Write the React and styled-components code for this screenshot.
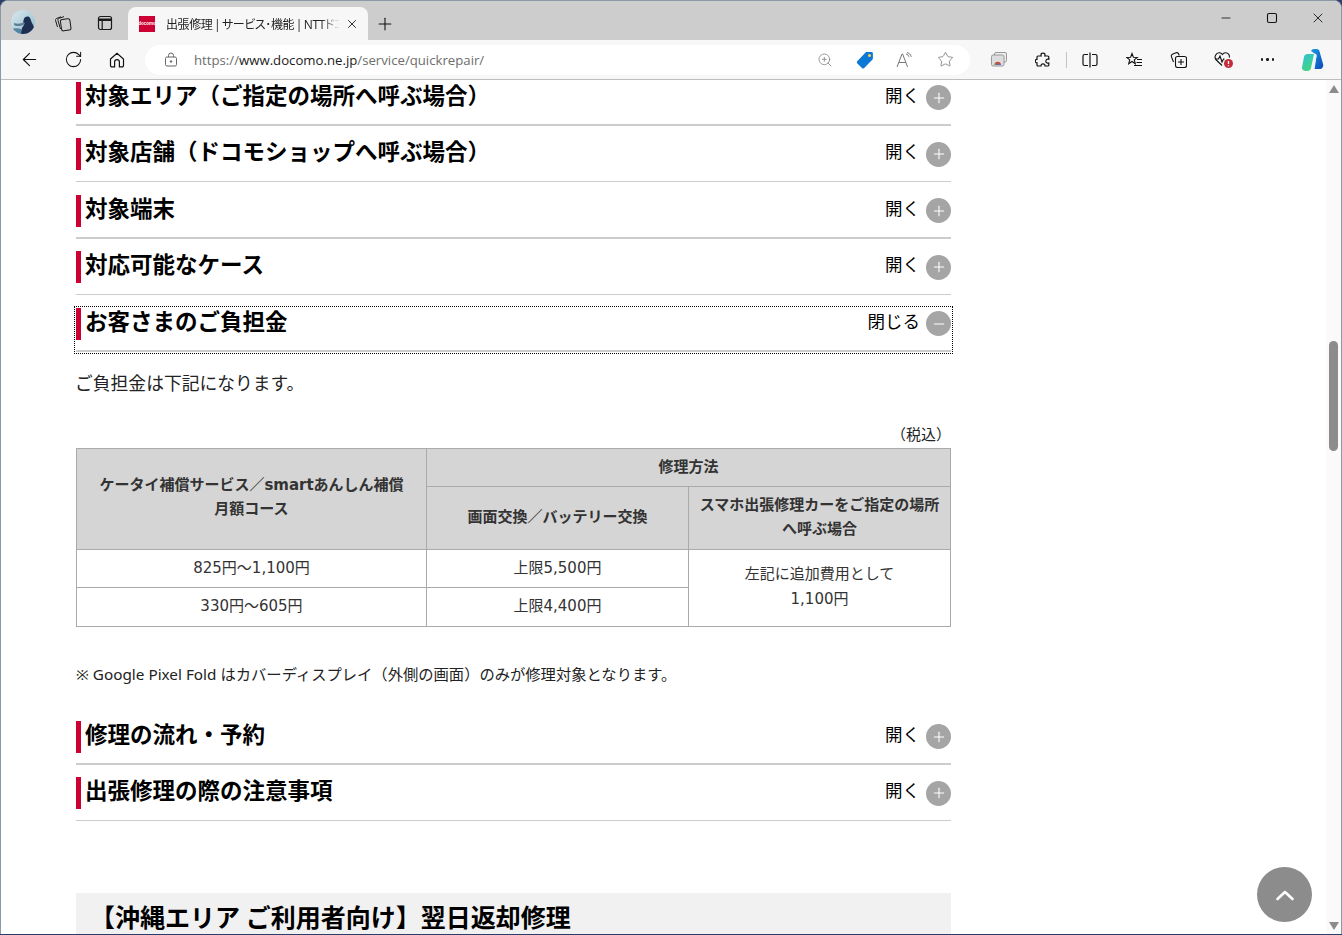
import React from "react";
import styled, { createGlobalStyle } from "styled-components";
import { ArrowLeft, RotateCw, Star, ZoomIn, X, Plus, Minus } from "lucide-react";

const FONT_JP = `"DejaVu Sans", "Noto Sans CJK JP", sans-serif`;
const FONT_UI = `"Open Sans", "Noto Sans CJK JP", sans-serif`;

const RECT_ROWS = [
  { title: "対象エリア（ご指定の場所へ呼ぶ場合）" },
  { title: "対象店舗（ドコモショップへ呼ぶ場合）" },
  { title: "対象端末" },
  { title: "対応可能なケース" },
];

const App = () => {
  return (
    <Window>
      <GlobalStyle />
      <TabStrip>
        <Avatar>
          <svg width="24" height="24" viewBox="0 0 24 24">
            <defs>
              <linearGradient id="sky" x1="0" y1="0" x2="1" y2="1">
                <stop offset="0" stopColor="#dbe8ee" />
                <stop offset="1" stopColor="#8fbccd" />
              </linearGradient>
              <clipPath id="round">
                <circle cx="12" cy="12" r="12" />
              </clipPath>
            </defs>
            <g clipPath="url(#round)">
              <rect width="24" height="24" fill="url(#sky)" />
              <path d="M10 24c0-4 1-7 3-9-1-2-1-4 0-6 1-3 5-3 6-1 1 2 1 3 2 5 2 3 3 7 3 11z" fill="#1e2f52" />
              <path d="M3 13c3 1 7 1 10-1l1 2c-3 2-8 3-11 1z" fill="#5d7f92" />
              <path d="M0 19c3-1 7-1 10 0v5H0z" fill="#4f87a3" />
            </g>
          </svg>
        </Avatar>
        <StripIcon>
          <svg width="18" height="18" viewBox="0 0 18 18" fill="none" stroke="#1a1a1a" strokeWidth="1">
            <rect x="7" y="5" width="9.5" height="11.5" rx="2" transform="rotate(-8 12 11)" />
            <path d="M6.5 15 4 6.5C3.7 5.5 4.2 4.6 5.2 4.3L10 2.6" />
            <path d="M3.5 13 1.6 6.6c-.3-1 .2-1.9 1.1-2.2L7 2.8" />
          </svg>
        </StripIcon>
        <StripIcon>
          <svg width="16" height="16" viewBox="0 0 16 16" fill="none" stroke="#1a1a1a" strokeWidth="1.2">
            <rect x="1.5" y="1.5" width="13" height="13" rx="2" />
            <path d="M1.5 4.8h13" strokeWidth="2.4" />
            <path d="M5.2 5v9.5" />
          </svg>
        </StripIcon>
        <ActiveTab>
          <Favicon>docomo</Favicon>
          <TabTitle>出張修理 | サービス･機能 | NTTドコモ</TabTitle>
          <TabClose>
            <X size={14} strokeWidth={1.5} color="#111" />
          </TabClose>
        </ActiveTab>
        <NewTab>
          <Plus size={20} strokeWidth={1.3} color="#111" />
        </NewTab>
        <WindowControls>
          <WindowButton>
            <Minus size={14} strokeWidth={1.4} color="#111" />
          </WindowButton>
          <WindowButton>
            <svg width="12" height="12" viewBox="0 0 12 12" fill="none" stroke="#111" strokeWidth="1.1">
              <rect x="1.5" y="1.5" width="9" height="9" rx="1.5" />
            </svg>
          </WindowButton>
          <WindowButton>
            <X size={16} strokeWidth={1.3} color="#111" />
          </WindowButton>
        </WindowControls>
      </TabStrip>

      <Toolbar>
        <NavIcon>
          <ArrowLeft size={21} strokeWidth={1.3} color="#111" />
        </NavIcon>
        <NavIcon>
          <RotateCw size={19} strokeWidth={1.3} color="#111" />
        </NavIcon>
        <NavIcon>
          <svg width="18" height="18" viewBox="0 0 18 18" fill="none" stroke="#111" strokeWidth="1.2">
            <path d="M2.5 8 9 2.2 15.5 8v6.5a1.4 1.4 0 0 1-1.4 1.4H11.4V11a2.4 2.4 0 0 0-4.8 0v4.9H3.9a1.4 1.4 0 0 1-1.4-1.4z" />
          </svg>
        </NavIcon>
        <AddressBar>
          <LockIcon>
            <svg width="14" height="15" viewBox="0 0 14 15" fill="none" stroke="#666" strokeWidth="1">
              <rect x="1.5" y="5" width="11" height="9" rx="1.5" />
              <path d="M4.5 5V3.5a2.5 2.5 0 0 1 5 0V5" />
              <circle cx="7" cy="9.5" r=".8" fill="#666" />
            </svg>
          </LockIcon>
          <Url>
            https://<b>www.docomo.ne.jp</b>/service/quickrepair/
          </Url>
          <AddressIcons>
            <AddressIcon>
              <ZoomIn size={16} strokeWidth={1.1} color="#777" />
            </AddressIcon>
            <AddressIcon>
              <svg width="18" height="18" viewBox="0 0 18 18">
                <path d="M1.2 10.2 9.6 1.5c.3-.3.6-.4 1-.4h5c.7 0 1.3.6 1.3 1.3v5c0 .4-.1.7-.4 1l-8.5 8.8c-.5.5-1.3.5-1.8 0l-5-5c-.5-.5-.5-1.3 0-1.8z" fill="#0a78d4" />
                <circle cx="13.5" cy="4.6" r="1.5" fill="#ffd23f" />
              </svg>
            </AddressIcon>
            <AddressIcon>
              <svg width="18" height="16" viewBox="0 0 18 16" fill="none" stroke="#777" strokeWidth="1">
                <path d="M1 15 6 2h.6l5 13M2.8 10.5h7" />
                <path d="M10 2c1.5.3 2.5 1.3 3 2.8M11 .6c2.2.4 3.7 1.9 4.3 4.2" />
              </svg>
            </AddressIcon>
            <AddressIcon>
              <Star size={17} strokeWidth={1} color="#666" />
            </AddressIcon>
          </AddressIcons>
        </AddressBar>
        <ToolIcons>
          <ToolIcon>
            <svg width="16" height="15" viewBox="0 0 16 15">
              <rect x="3.5" y=".5" width="12" height="9.5" rx="1.5" fill="#eee" stroke="#999" />
              <rect x=".5" y="3" width="12.5" height="11" rx="1.5" fill="#ddd" stroke="#999" />
              <path d="M3.5 13a3.2 3.2 0 0 1 6.4 0z" fill="#d9463e" />
              <path d="M6.7 13a1.4 1.4 0 0 1 3.2 0z" fill="#3b78d8" />
              <path d="M3.5 13h1.7l.5-1.5-1-1z" fill="#3aa757" />
            </svg>
          </ToolIcon>
          <ToolIcon>
            <svg width="16" height="16" viewBox="0 0 16 16" fill="none" stroke="#111" strokeWidth="1.2">
              <path d="M6 3c0-2.4 4-2.4 4 0 0 .4-.1.7-.2 1h3c.6 0 1 .4 1 1v2.3c-.8-.3-1.3-.3-1.7 0-1.700.8-1.700 3 0 3.700.5.2 1 .2 1.700 0V13c0 .6-.4 1-1 1H10c.3-2.800-4.300-2.800-4 0H3c-.6 0-1-.4-1-1v-2.200C-.3 11-.3 7 2 7.300V5c0-.6.4-1 1-1h3.200C6.100 3.700 6 3.400 6 3z" />
            </svg>
          </ToolIcon>
          <ToolDivider />
          <ToolIcon>
            <svg width="16" height="16" viewBox="0 0 16 16" fill="none" stroke="#111" strokeWidth="1.2">
              <path d="M6 2.5H2.5A1.5 1.5 0 0 0 1 4v8a1.5 1.5 0 0 0 1.5 1.5H6M10 2.5h3.5A1.5 1.5 0 0 1 15 4v8a1.5 1.5 0 0 1-1.5 1.5H10M8 .5v15" />
            </svg>
          </ToolIcon>
          <ToolIcon>
            <svg width="17" height="16" viewBox="0 0 17 16" fill="none" stroke="#111" strokeWidth="1.1">
              <path d="M6 1.5 7.4 5.2l3.900.2-3 2.500 1 3.800L6 9.500 2.700 11.700l1-3.800-3-2.500 3.900-.2z" />
              <path d="M11 7.5h5M10.500 10.500h5.500M8 13.500h8" />
            </svg>
          </ToolIcon>
          <ToolIcon>
            <svg width="17" height="17" viewBox="0 0 17 17" fill="none" stroke="#111" strokeWidth="1.1">
              <path d="M3.5 11 1.4 5.600c-.4-1 .1-2 1-2.400L6 1.800c1-.4 2 .1 2.400.8l.9 2" />
              <rect x="5.5" y="5.5" width="11" height="11" rx="2" />
              <path d="M11 8v6M8 11h6" />
            </svg>
          </ToolIcon>
          <ToolIcon>
            <svg width="19" height="17" viewBox="0 0 19 17">
              <path d="M8 14.500 2.300 9C-.5 6 2 1.500 5.500 1.800c1.200.1 2.200.8 2.900 1.700.7-.9 1.700-1.600 2.900-1.700 2.800-.2 4.600 2.400 4 4.700" fill="none" stroke="#111" strokeWidth="1.1" />
              <path d="M1.500 8h3l1.500-3 2 6 1.500-3h1" fill="none" stroke="#111" strokeWidth="1.1" />
              <circle cx="14.5" cy="12.5" r="4.5" fill="#c42b38" />
              <path d="M14.500 10v3M14.500 14.300v1" stroke="#fff" strokeWidth="1.3" />
            </svg>
          </ToolIcon>
          <ToolIcon>
            <Dots>
              <i />
              <i />
              <i />
            </Dots>
          </ToolIcon>
          <ToolIcon>
            <svg width="24" height="24" viewBox="0 0 24 24">
              <defs>
                <linearGradient id="cpA" x1="0" y1="0" x2="1" y2="1">
                  <stop offset="0" stopColor="#1a9be6" />
                  <stop offset="1" stopColor="#0c47b8" />
                </linearGradient>
                <linearGradient id="cpB" x1="0" y1="0" x2="0.6" y2="1">
                  <stop offset="0" stopColor="#2cc0dd" />
                  <stop offset="1" stopColor="#45d67c" />
                </linearGradient>
              </defs>
              <path d="M10 3c.5-1.300 1.500-2 3-2h2.500c1.500 0 2.500.7 3 2.200l3.600 13c.6 2.500-.9 4.800-3.500 4.800H13l2.500-13c.2-1.500-.7-2.500-2-2.500z" fill="url(#cpA)" />
              <path d="M3 9c.4-2 1.800-3 3.600-3h6.400l-3 14c-.4 1.800-1.600 3-3.500 3H4.200c-2.300 0-3.600-2-3.100-4.200z" fill="url(#cpB)" />
              <path d="M12.500 6h1.300c1.200 0 1.900 1 1.700 2.300L13.600 21h-1.900l1.800-13c.1-1-.2-1.700-1-2z" fill="#e8f6fb" />
            </svg>
          </ToolIcon>
        </ToolIcons>
      </Toolbar>

      <Viewport>
        <Page>
          <Content>
            {RECT_ROWS.map(({ title }) => (
              <AccordionRow key={title} title={title} />
            ))}
            <FocusRow>
              <AccordionRow title="お客さまのご負担金" open />
            </FocusRow>
            <Lead>ご負担金は下記になります。</Lead>
            <TaxNote>（税込）</TaxNote>
            <PriceTable>
              <colgroup>
                <col width="350" />
                <col width="262" />
                <col width="262" />
              </colgroup>
              <thead>
                <tr>
                  <HeadCell rowSpan={2}>
                    ケータイ補償サービス／smartあんしん補償
                    <br />
                    月額コース
                    <Pad />
                  </HeadCell>
                  <HeadCell colSpan={2} $short>
                    修理方法
                  </HeadCell>
                </tr>
                <tr>
                  <HeadCell>画面交換／バッテリー交換</HeadCell>
                  <HeadCell>
                    スマホ出張修理カーをご指定の場所
                    <br />
                    へ呼ぶ場合
                  </HeadCell>
                </tr>
              </thead>
              <tbody>
                <tr>
                  <BodyCell>825円～1,100円</BodyCell>
                  <BodyCell>上限5,500円</BodyCell>
                  <BodyCell rowSpan={2} $lift>
                    左記に追加費用として
                    <br />
                    1,100円
                  </BodyCell>
                </tr>
                <tr>
                  <BodyCell $tall $lift>330円～605円</BodyCell>
                  <BodyCell $tall $lift>上限4,400円</BodyCell>
                </tr>
              </tbody>
            </PriceTable>
            <Note>※ Google Pixel Fold はカバーディスプレイ（外側の画面）のみが修理対象となります。</Note>
            <AccordionRow title="修理の流れ・予約" />
            <AccordionRow title="出張修理の際の注意事項" />
            <OkinawaBox>【沖縄エリア ご利用者向け】翌日返却修理</OkinawaBox>
          </Content>
          <ScrollTop>
            <svg width="20" height="12" viewBox="0 0 20 12" fill="none" stroke="#fff" strokeWidth="2.6" strokeLinecap="round" strokeLinejoin="round">
              <path d="M2.5 10 10 3l7.5 7" />
            </svg>
          </ScrollTop>
        </Page>
        <Scrollbar>
          <ArrowUp />
          <Thumb />
          <ArrowDown />
        </Scrollbar>
      </Viewport>
    </Window>
  );
};

const AccordionRow = ({ title, open }) => (
  <Row>
    <RowTitle>{title}</RowTitle>
    <RowToggle>
      {open ? "閉じる" : "開く"}
      <ToggleDot>
        {open ? (
          <Minus size={16} strokeWidth={1.6} color="#fff" />
        ) : (
          <Plus size={16} strokeWidth={1.6} color="#fff" />
        )}
      </ToggleDot>
    </RowToggle>
  </Row>
);

export default App;

const GlobalStyle = createGlobalStyle`
  html, body {
    margin: 0;
    padding: 0;
    height: 100%;
    overflow: hidden;
    background: #2b3f66;
  }
  * {
    box-sizing: border-box;
  }
`;

const Window = styled.div`
  width: 1342px;
  height: 934px;
  display: flex;
  flex-direction: column;
  overflow: hidden;
  background: #fff;
  border: 1px solid #8b98a5;
  border-bottom: 0;
  border-radius: 8px 8px 0 0;
  font-family: ${FONT_JP};
`;

const TabStrip = styled.div`
  height: 39px;
  flex: none;
  display: flex;
  align-items: flex-end;
  background: #cdcdcd;
  padding-left: 9px;
`;

const Avatar = styled.div`
  width: 26px;
  height: 33px;
  display: flex;
  align-items: flex-start;
  justify-content: center;
  padding-top: 3px;
`;

const StripIcon = styled.div`
  width: 42px;
  height: 33px;
  display: flex;
  align-items: center;
  justify-content: center;
  padding-bottom: 1px;
  &:nth-child(2) {
    margin-left: 6px;
  }
`;

const ActiveTab = styled.div`
  width: 240px;
  height: 33px;
  margin-left: 2px;
  padding: 0 8px 0 11px;
  display: flex;
  align-items: center;
  background: #f7f7f7;
  border-radius: 8px 8px 0 0;
`;

const Favicon = styled.div`
  width: 16px;
  height: 16px;
  flex: none;
  display: flex;
  align-items: center;
  justify-content: center;
  overflow: hidden;
  background: #cc0033;
  color: #fff;
  font: bold 4.5px "Liberation Sans", sans-serif;
`;

const TabTitle = styled.div`
  flex: 1;
  min-width: 0;
  margin-left: 11px;
  overflow: hidden;
  white-space: nowrap;
  font: 12px ${FONT_UI};
  font-feature-settings: "palt";
  letter-spacing: -0.4px;
  word-spacing: -1px;
  color: #222;
  -webkit-mask-image: linear-gradient(90deg, #000 155px, transparent 174px);
  mask-image: linear-gradient(90deg, #000 155px, transparent 174px);
`;

const TabClose = styled.div`
  width: 16px;
  display: flex;
  justify-content: center;
`;

const NewTab = styled.div`
  width: 34px;
  height: 33px;
  display: flex;
  align-items: center;
  justify-content: center;
`;

const WindowControls = styled.div`
  margin-left: auto;
  height: 39px;
  display: flex;
  align-self: flex-start;
`;

const WindowButton = styled.div`
  width: 46px;
  height: 33px;
  display: flex;
  align-items: center;
  justify-content: center;
`;

const Toolbar = styled.div`
  height: 40px;
  flex: none;
  display: flex;
  align-items: center;
  padding-left: 6px;
  background: #f7f7f7;
  border-bottom: 1px solid #bdbdbd;
`;

const NavIcon = styled.div`
  width: 44px;
  height: 30px;
  display: flex;
  align-items: center;
  justify-content: center;
`;

const AddressBar = styled.div`
  width: 825px;
  height: 30px;
  margin-left: 6px;
  padding: 0 5px 0 19px;
  display: flex;
  align-items: center;
  background: #fff;
  border-radius: 15px;
`;

const LockIcon = styled.div`
  width: 14px;
  height: 15px;
  display: flex;
`;

const Url = styled.div`
  margin-left: 16px;
  font: 13.2px ${FONT_UI};
  color: #6d6d6d;
  b {
    font-weight: 400;
    color: #1a1a1a;
  }
`;

const AddressIcons = styled.div`
  margin-left: auto;
  display: flex;
`;

const AddressIcon = styled.div`
  width: 40px;
  height: 24px;
  display: flex;
  align-items: center;
  justify-content: center;
`;

const ToolIcons = styled.div`
  margin-left: 6.5px;
  display: flex;
  align-items: center;
`;

const ToolIcon = styled.div`
  width: 44.3px;
  height: 30px;
  display: flex;
  align-items: center;
  justify-content: center;
  &:last-child {
    margin-left: 1.5px;
  }
`;

const ToolDivider = styled.div`
  width: 1px;
  height: 16px;
  margin: 0 1px;
  background: #c4c4c4;
`;

const Dots = styled.div`
  display: flex;
  gap: 3px;
  i {
    width: 2.4px;
    height: 2.4px;
    border-radius: 50%;
    background: #1a1a1a;
  }
`;

const Viewport = styled.div`
  flex: 1;
  min-height: 0;
  display: flex;
`;

const Page = styled.div`
  position: relative;
  flex: 1;
  min-width: 0;
  overflow: hidden;
  padding: 1.5px 0 0 75px;
`;

const Content = styled.div`
  width: 875px;
`;

const Row = styled.div`
  height: 56.5px;
  padding-bottom: 12.5px;
  display: flex;
  flex-direction: column;
  position: relative;
  &::after {
    content: "";
    display: block;
    height: 1.5px;
    margin-top: auto;
    background: #cccccc;
  }
`;

const RowTitle = styled.div`
  height: 32px;
  padding-left: 4px;
  border-left: 5px solid #cc0033;
  font-size: 22.5px;
  font-weight: 700;
  line-height: 24px;
  color: #000;
  font-family: "Noto Sans CJK JP", sans-serif;
`;

const RowToggle = styled.div`
  position: absolute;
  top: 0;
  right: 0;
  display: flex;
  align-items: flex-start;
  font-size: 17.5px;
  line-height: 26px;
  color: #000;
  font-family: "Noto Sans CJK JP", sans-serif;
`;

const ToggleDot = styled.span`
  width: 25px;
  height: 25px;
  margin: 3.5px 0 0 6px;
  display: flex;
  align-items: center;
  justify-content: center;
  border-radius: 50%;
  background: #a5a5a5;
`;

const FocusRow = styled.div`
  height: 44px;
  outline: 1px dotted #000;
  outline-offset: 1px;
  > div {
    height: 44px;
    padding-bottom: 0;
  }
`;

const Lead = styled.p`
  margin: 18px 0 0 -1px;
  font: 17.8px/25px "Noto Sans CJK JP", sans-serif;
  color: #222;
`;

const TaxNote = styled.p`
  margin: 28.5px 0 0;
  text-align: right;
  font: 15px/22px "Noto Sans CJK JP", sans-serif;
  color: #222;
`;

const PriceTable = styled.table`
  width: 875px;
  margin-top: 3px;
  border-collapse: collapse;
  table-layout: fixed;
`;

const HeadCell = styled.th`
  height: ${({ $short }) => ($short ? "38px" : "63px")};
  padding: 0 4px 2px;
  border: 1px solid #aaaaaa;
  background: #d5d5d5;
  color: #333;
  font-size: 15px;
  font-weight: 700;
  line-height: 24px;
  font-family: ${FONT_JP};
  text-align: center;
`;

const Pad = styled.span`
  display: block;
  height: 3px;
`;

const BodyCell = styled.td`
  height: ${({ $tall }) => ($tall ? "39px" : "38px")};
  padding: ${({ $lift }) => ($lift ? "0 0 2px" : "0")};
  border: 1px solid #aaaaaa;
  color: #333;
  font-size: 15px;
  line-height: 25px;
  font-family: ${FONT_JP};
  text-align: center;
`;

const Note = styled.p`
  margin: 35px 0 34.5px;
  font: 15.3px/24px "Noto Sans", "Noto Sans CJK JP", sans-serif;
  color: #222;
`;

const OkinawaBox = styled.div`
  margin-top: 59.5px;
  padding: 7px 14px;
  height: 60px;
  background: #f1f1f1;
  font: 700 25px/33px "Noto Sans CJK JP", sans-serif;
  color: #000;
`;

const ScrollTop = styled.div`
  position: absolute;
  right: 14px;
  bottom: 12px;
  width: 55px;
  height: 55px;
  display: flex;
  align-items: center;
  justify-content: center;
  border-radius: 50%;
  background: #8c8c8c;
`;

const Scrollbar = styled.div`
  width: 15px;
  flex: none;
  display: flex;
  flex-direction: column;
  align-items: center;
  background: #fafafa;
`;

const ArrowUp = styled.div`
  margin-top: 5px;
  width: 0;
  height: 0;
  border-left: 5px solid transparent;
  border-right: 5px solid transparent;
  border-bottom: 8px solid #8c8c8c;
`;

const ArrowDown = styled.div`
  margin-top: auto;
  margin-bottom: 4px;
  width: 0;
  height: 0;
  border-left: 5px solid transparent;
  border-right: 5px solid transparent;
  border-top: 8px solid #8c8c8c;
`;

const Thumb = styled.div`
  width: 9px;
  height: 110px;
  margin-top: 248px;
  border-radius: 5px;
  background: #8c8c8c;
`;
